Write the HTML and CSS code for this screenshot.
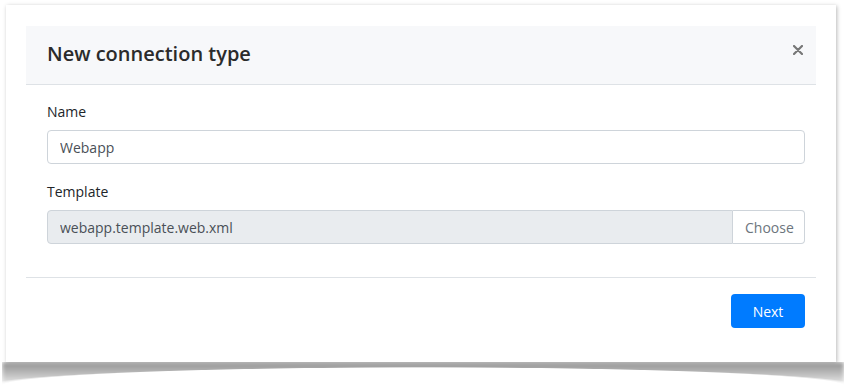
FILE: index.html
```html
<!DOCTYPE html>
<html lang="en">
<head>
    <meta charset="UTF-8">
    <meta name="viewport" content="width=device-width, initial-scale=1.0">
    <title>New connection type</title>
    <link rel="stylesheet" href="styles.css">
</head>
<body>
    <div class="sheet">
        <div class="modal">
            <!-- Header -->
            <div class="modal-header">
                <h5 class="modal-title">New connection type</h5>
                <button class="close" aria-label="Close">
                    <svg width="10" height="10" viewBox="0 0 10 10"><path d="M1 1L9 9M9 1L1 9" stroke="#777" stroke-width="2.2" stroke-linecap="round"/></svg>
                </button>
            </div>
            <!-- Body -->
            <div class="modal-body">
                <div class="form-group">
                    <label for="connName">Name</label>
                    <input type="text" id="connName" class="form-control" value="Webapp">
                </div>
                <div class="form-group">
                    <label for="connTemplate">Template</label>
                    <div class="input-group">
                        <input type="text" id="connTemplate" class="form-control" value="webapp.template.web.xml" readonly>
                        <button class="btn btn-outline">Choose</button>
                    </div>
                </div>
            </div>
            <!-- Footer -->
            <div class="modal-footer">
                <button class="btn btn-primary">Next</button>
            </div>
        </div>
    </div>
</body>
</html>
```

FILE: styles.css
```css
:root {
    --primary-color: #007bff;
    --border-color: #ced4da;
    --divider-color: #dee2e6;
    --text-color: #212529;
}
html, body {
    min-height: 391px;
}
body {
    font-family: 'Open Sans', sans-serif;
    background: white;
    margin: 0;
    padding: 5px 14px 0 6px;
    box-sizing: border-box;
    color: var(--text-color);
}
.sheet {
    position: relative;
    background: white;
    padding: 21px 20px 20px 20px;
    box-shadow: 1px 1px 4px rgba(0,0,0,0.28);
    height: 316px;
}
/* curved shadow under the sheet */
.sheet::after {
    content: '';
    position: absolute;
    left: -4px;
    right: -8px;
    top: 100%;
    height: 24px;
    background: linear-gradient(#8f8f8f, #c8c8c8 60%, #f2f2f2);
    -webkit-mask-image: radial-gradient(ellipse 52% 19px at 50% 100%, transparent 96%, #000 100%);
    mask-image: radial-gradient(ellipse 52% 19px at 50% 100%, transparent 96%, #000 100%);
    filter: blur(2px);
}
.modal-header {
    display: flex;
    justify-content: space-between;
    align-items: center;
    background: #f7f8fa;
    border-bottom: 1px solid var(--divider-color);
    height: 59px;
    padding: 0 13px 0 21px;
    box-sizing: border-box;
}
.modal-title {
    margin: -3px 0 0 0;
    font-size: 20px;
    font-weight: 600;
    color: #2b2b2b;
}
.close {
    border: none;
    background: none;
    padding: 0;
    cursor: pointer;
    display: flex;
    margin-top: -10px;
}
.modal-body {
    padding: 16px 11px 17px 21px;
}
.form-group {
    margin-bottom: 17px;
}
.form-group:last-child {
    margin-bottom: 16px;
}
.form-group label {
    display: block;
    font-size: 14px;
    line-height: 21px;
    margin-bottom: 8px;
}
.form-control {
    display: block;
    width: 100%;
    box-sizing: border-box;
    height: 34px;
    padding: 0 12px;
    border: 1px solid var(--border-color);
    border-radius: 4px;
    font-family: inherit;
    font-size: 14px;
    color: #495057;
    background: white;
    outline: none;
}
.form-control[readonly] {
    background: #e9ecef;
}
.input-group {
    display: flex;
}
.input-group .form-control {
    flex: 1;
    border-radius: 4px 0 0 4px;
}
.btn {
    height: 34px;
    padding: 0 12px;
    border-radius: 4px;
    font-family: inherit;
    font-size: 14px;
    cursor: pointer;
}
.btn-outline {
    background: white;
    color: #6c757d;
    border: 1px solid var(--border-color);
    border-left: none;
    border-radius: 0 4px 4px 0;
    width: 72px;
}
.btn-primary {
    background: var(--primary-color);
    color: white;
    border: none;
    width: 74px;
}
.modal-footer {
    display: flex;
    justify-content: flex-end;
    border-top: 1px solid var(--divider-color);
    padding: 16px 11px 0 0;
}
```
